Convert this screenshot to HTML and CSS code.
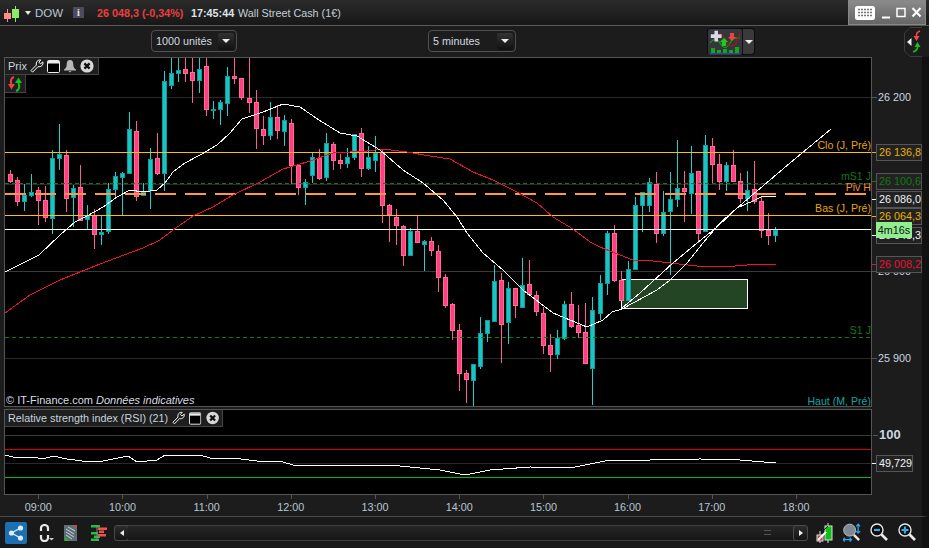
FILE: index.html
```html
<!DOCTYPE html>
<html lang="fr">
<head>
<meta charset="utf-8">
<title>DOW</title>
<link rel="stylesheet" href="styles.css">
</head>
<body>
<svg class="defs" width="0" height="0" aria-hidden="true">
  <symbol id="wrench" viewBox="0 0 14 14"><path d="M1 11.5 L6.4 6 C5.6 3.2 7.6 .6 10.8 1 L8.9 3.2 L10.5 4.9 L12.9 2.9 C13.5 6 11 8.4 8 7.6 L2.6 13.2 Z" fill="none" stroke="#fff" stroke-width="1"/></symbol>
  <symbol id="win" viewBox="0 0 13 13"><rect x=".5" y=".5" width="12" height="12" rx="1" fill="#000" stroke="#eee"/><rect x="1" y="1" width="11" height="2.5" fill="#eee"/></symbol>
  <symbol id="bell" viewBox="0 0 14 14"><path d="M7 1 C9.5 1 10.3 3 10.3 5.5 C10.3 8 11.3 9.5 13 10.5 L13 11.5 L1 11.5 L1 10.5 C2.7 9.5 3.7 8 3.7 5.5 C3.7 3 4.5 1 7 1 Z" fill="#b8b8b8"/><path d="M5.5 12 H8.5 L7 13.5 Z" fill="#b8b8b8"/></symbol>
  <symbol id="close" viewBox="0 0 14 14"><circle cx="7" cy="7" r="6.6" fill="#d8d8d8"/><path d="M4.4 4.4 L9.6 9.6 M9.6 4.4 L4.4 9.6" stroke="#111" stroke-width="2.4"/></symbol>
  <symbol id="flip" viewBox="0 0 16 16"><path d="M7 1 C4 2 3 5 4.5 9" fill="none" stroke="#f04040" stroke-width="2"/><path d="M1 8 H8 L4.5 13.5 Z" fill="#f04040"/><path d="M9 15 C12 14 13 11 11.5 7" fill="none" stroke="#18c018" stroke-width="2"/><path d="M8 7 H15 L11.5 1.5 Z" fill="#18c018"/></symbol>
</svg>

<div class="app">
  <header class="titlebar">
    <svg class="logo" width="16" height="18" viewBox="0 0 16 18"><path d="M3.5 4 V17" stroke="#ff8a8a"/><rect x="0" y="8" width="7" height="6" fill="#ff8a8a"/><path d="M11.5 1 V17" stroke="#88ee66"/><rect x="8" y="4" width="7" height="9" fill="#88ee66"/></svg>
    <span class="caret"></span>
    <span class="symbol">DOW</span>
    <span class="info">i</span>
    <span class="quote">26 048,3 (-0,34%)</span>
    <span class="clock">17:45:44</span>
    <span class="name">Wall Street Cash (1€)</span>
    <div class="winctl">
      <svg class="kbd" width="20" height="14" viewBox="0 0 20 14"><rect width="20" height="14" rx="2.5" fill="#fff"/><path d="M3 3.5 H17 M3 6.5 H17 M3 9.5 H17" stroke="#777" stroke-width="1.6" stroke-dasharray="2 1"/></svg>
      <svg width="10" height="14" viewBox="0 0 10 14"><path d="M1 11.5 H9" stroke="#fff" stroke-width="2"/></svg>
      <svg width="10" height="14" viewBox="0 0 10 14"><rect x="1" y="2.5" width="8" height="8" fill="none" stroke="#fff" stroke-width="1.5"/></svg>
      <svg width="11" height="14" viewBox="0 0 11 14"><path d="M1.5 2 L9.5 10.5 M9.5 2 L1.5 10.5" stroke="#fff" stroke-width="2"/></svg>
    </div>
  </header>

  <div class="toolbar">
    <div class="select units"><span>1000 unités</span><button class="select-btn"></button></div>
    <div class="select period"><span>5 minutes</span><button class="select-btn"></button></div>
    <div class="strategy">
      <svg width="34" height="26" viewBox="0 0 34 26">
        <rect width="34" height="26" rx="2" fill="#33363a"/>
        <path d="M2 14 C6 9 9 9 12 14 S18 21 22 14 S27 10 32 9" fill="none" stroke="#199a19" stroke-width="1.2"/>
        <path d="M11 4 C17 5 17 16 23 17 S29 10 32 4" fill="none" stroke="#8a1f1f" stroke-width="1.6"/>
        <path d="M6 3 H10 V7 H14 V11 H10 V15 H6 V11 H2 V7 H6 Z" fill="#d8d8e8" transform="translate(1,-1) scale(.9)"/>
        <path d="M22 4 H26 V8 H28 L24 12 L20 8 H22 Z" fill="#f04040"/>
        <path d="M14 17 V13 H12 L16 9 L20 13 H18 V17 Z" fill="#19d019"/>
        <path d="M3 19 H7 V24 H3 Z M9 21 H13 V24 H9 Z M15 20 H19 V24 H15 Z M21 21 H25 V24 H21 Z M27 18 H31 V24 H27 Z" fill="#14a814"/>
        <path d="M2 24.5 H32" stroke="#3040c0"/>
      </svg>
      <button class="strategy-btn"></button>
    </div>
    <svg class="sidetab" width="18" height="30" viewBox="0 0 18 30">
      <path d="M18 .5 H6 L.5 6 V24 L6 29.5 H18" fill="#1c1c1c" stroke="#3c3c3c"/>
      <path d="M7.500 11 L3 15 L7.500 19 Z" fill="#eee"/>
      <path d="M16 4 C13 5 12 7 12.500 10" fill="none" stroke="#f04848" stroke-width="1.500"/>
      <path d="M9.500 9 H15.500 L12.500 14 Z" fill="#f04848"/>
      <path d="M9 25 C12 24 14 22 13.500 19" fill="none" stroke="#18c018" stroke-width="1.500"/>
      <path d="M10.500 20 H16.500 L13.500 15 Z" fill="#18c018"/>
    </svg>
  </div>

  <main class="workspace">
    <section class="pane">
      <div class="plot plot-price">
        <svg class="chart" width="866" height="348" viewBox="5 58 866 348">
          <g class="crisp">
            <path d="M5 97.5 H871" stroke="#2a2a2a"/>
            <path d="M5 184.5 H871" stroke="#2a2a2a"/>
            <path d="M5 271.5 H871" stroke="#3a3a3a"/>
            <path d="M5 358.5 H871" stroke="#2a2a2a"/>
          </g>
          <rect class="zone" x="621.5" y="279.5" width="126" height="29"/>
          <g id="candles" class="crisp"></g>
          <g class="crisp">
            <path d="M5 152.5 H871 M5 215.5 H871" stroke="#ffc000"/>
            <path d="M5 229.5 H871" stroke="#fff"/>
            <path d="M5 183.5 H871 M5 337.5 H871" stroke="#0f7a0f" stroke-dasharray="4 3"/>
            <path d="M5 193.5 H871" stroke="#ff9a3c" stroke-width="2" stroke-dasharray="21 9"/>
          </g>
          <polyline class="ma red" points="5,313 30,295 60,280 100,264 124,255 143,248 160,240 173,230 193,216 213,207 233,195 260,182 283,169 290,167 307,162 333,153 367,151 383,149 407,152 430,156 450,159 473,172 493,180 517,192 537,203 553,217 573,229 590,242 600,247 620,255 633,260 653,261 670,263 697,266 723,267 747,265 776,264"/>
          <polyline class="ma" points="5,272 25,262 39,255 60,235 75,222 87,216 103,207 117,197 130,190 143,192 157,190 165,183 173,172 185,163 200,155 217,145 230,133 242,119 263,112 283,104 300,107 319,120 340,133 357,136 380,150 403,170 423,183 443,200 457,217 467,233 483,253 503,270 523,290 553,313 587,327 603,320 612,312 622,309 657,290 670,280 687,263 703,243 720,223 737,208 753,201 763,196 776,197"/>
          <polyline class="ma" points="622,308 640,293 673,263 697,243 717,227 737,208 770,180 790,163 831,129"/>
          <text class="lbl amber" x="871" y="149">Clo (J, Pré)</text>
          <text class="lbl dgreen" x="871" y="180">mS1 J</text>
          <text class="lbl orange" x="871" y="191">Piv H</text>
          <text class="lbl amber" x="871" y="212">Bas (J, Pré)</text>
          <text class="lbl dgreen" x="871" y="334">S1 J</text>
          <text class="lbl teal" x="871" y="405">Haut (M, Pré)</text>
          <text class="copy" x="6" y="404">© IT-Finance.com <tspan class="ital">Données indicatives</tspan></text>
        </svg>
        <div class="legend legend-main">
          <span class="legend-name">Prix</span>
          <svg width="14" height="14"><use href="#wrench"/></svg>
          <svg width="13" height="13"><use href="#win"/></svg>
          <svg width="14" height="14"><use href="#bell"/></svg>
          <svg width="14" height="14"><use href="#close"/></svg>
        </div>
        <div class="legend legend-flip"><svg width="16" height="16"><use href="#flip"/></svg></div>
      </div>
      <div class="axis">
        <span class="axis-val" style="top:32px">26 200</span>
        <span class="axis-val" style="top:206px">26 000</span>
        <span class="axis-val" style="top:293px">25 900</span>
        <span class="tag amber" style="top:87px">26 136,8</span>
        <span class="tag dgreen" style="top:116px">26 100,6</span>
        <span class="tag white" style="top:134px">26 086,0</span>
        <span class="tag amber" style="top:151px">26 064,3</span>
        <span class="tag white" style="top:170px">26 048,3</span>
        <span class="tag red" style="top:199px">26 008,2</span>
        <span class="timer" style="top:165px">4m16s</span>
      </div>
    </section>

    <section class="pane pane-rsi">
      <div class="plot plot-rsi">
        <svg class="chart" width="866" height="84" viewBox="5 410 866 84">
          <g class="crisp">
            <path d="M5 435.5 H871" stroke="#3a3a3a"/>
            <path d="M5 463.5 H871" stroke="#2a2a2a"/>
            <path d="M5 449.5 H871" stroke="#d80000"/>
            <path d="M5 477.5 H871" stroke="#00c000"/>
          </g>
          <polyline class="ma" points="5,455 17,458 33,457 43,459 53,456 67,459 90,462 103,461 128,456 137,462 157,460 165,455 200,455 210,458 233,458 257,461 283,462 293,465 310,465 350,465 400,466 440,470 465,475 490,470 530,467 570,468 610,460 650,460 700,459 740,460 776,463"/>
        </svg>
        <div class="legend legend-rsi">
          <span>Relative strength index (RSI) (21)</span>
          <svg width="14" height="14"><use href="#wrench"/></svg>
          <svg width="13" height="13"><use href="#win"/></svg>
          <svg width="14" height="14"><use href="#close"/></svg>
        </div>
      </div>
      <div class="axis">
        <span class="axis-val big" style="top:18px">100</span>
        <span class="tag short white" style="top:46px">49,729</span>
      </div>
    </section>

    <div class="timeaxis">
      <span>09:00</span><span>10:00</span><span>11:00</span><span>12:00</span><span>13:00</span><span>14:00</span><span>15:00</span><span>16:00</span><span>17:00</span><span>18:00</span>
    </div>
  </main>

  <footer class="bottombar">
    <button class="share">
      <svg width="16" height="16" viewBox="0 0 16 16"><path d="M12.5 3 L3.5 8 L12.5 13" fill="none" stroke="#dfeaf5" stroke-width="1.4"/><circle cx="12.5" cy="3" r="2.6" fill="#dfeaf5"/><circle cx="3.5" cy="8" r="2.6" fill="#dfeaf5"/><circle cx="12.5" cy="13" r="2.6" fill="#dfeaf5"/></svg>
    </button>
    <svg class="tool magnet" width="16" height="18" viewBox="0 0 16 18"><path d="M3 7 V4 A3.5 3 0 0 1 10 4 V7 M3 11 V14 A3.5 3 0 0 0 10 14 V11" fill="none" stroke="#e8e8e8" stroke-width="2.2"/><path d="M11 14 H16 L13.5 16.5 Z" fill="#ccc"/></svg>
    <svg class="tool doc" width="13" height="16" viewBox="0 0 13 16"><rect width="13" height="16" fill="#5f6f78"/><path d="M2 4 L10 9 M2 7 L10 12 M2 10 L8 14 M4 2 L11 6" stroke="#c8d0d4"/><path d="M9 0 H13 V3 Z" fill="#e84040"/><path d="M1 16 L1 12 L5 16 Z" fill="#20c020"/></svg>
    <svg class="tool bars" width="16" height="16" viewBox="0 0 16 16"><path d="M0 0 H9 V2.5 H0 Z M0 7 H7 V9.5 H0 Z M3 10.500 H9 V13 H3 Z M0 13.500 H8 V16 H0 Z" fill="#20c040"/><path d="M7 2.500 H16 V5 H7 Z M8 5.500 H13 V8 H8 Z M7 9 H15 V11.500 H7 Z" fill="#f05050"/><path d="M6 0 V16" stroke="#888"/></svg>
    <div class="scrollbar">
      <button class="scroll-end"><span class="arr-left"></span></button>
      <div class="thumb"><span class="grip"></span></div>
      <button class="scroll-end"><span class="arr-right"></span></button>
    </div>
    <svg class="tool split" width="17" height="20" viewBox="0 0 17 20"><path d="M12 0 V20" stroke="#ddd"/><rect x="9" y="3" width="7" height="14" fill="#10c010" stroke="#ddd"/><path d="M4 8 V20" stroke="#ddd"/><rect x="1" y="12" width="6" height="6" fill="#d04040" stroke="#ddd"/><path d="M2 17 L10 9" stroke="#fff" stroke-width="2"/><path d="M8 7 L12 3" stroke="#222" stroke-width="1"/></svg>
    <svg class="tool fit" width="18" height="20" viewBox="0 0 19 20"><circle cx="7" cy="7" r="6.300" fill="#7d8a96" stroke="#b8c0c8"/><path d="M11.500 12 L17 17.500" stroke="#e8e8e8" stroke-width="2.600"/><path d="M16 1 V10 M14 3 L16 .8 L18 3 M14 8 L16 10.200 L18 8" fill="none" stroke="#2ca8f0" stroke-width="1.300"/><path d="M0 17 H9 M2 15 L0 17 L2 19 M7 15 L9 17 L7 19" fill="none" stroke="#2ca8f0" stroke-width="1.300"/></svg>
    <svg class="tool minus" width="18" height="19" viewBox="0 0 18 19"><circle cx="7" cy="7" r="6" fill="#0a0a0a" stroke="#e8e8e8" stroke-width="1.400"/><path d="M4 7 H10" stroke="#35a8f0" stroke-width="2.200"/><path d="M11.500 11.500 L17 17" stroke="#e8e8e8" stroke-width="2.600"/></svg>
    <svg class="tool" width="18" height="19" viewBox="0 0 18 19"><circle cx="7" cy="7" r="6" fill="#0a0a0a" stroke="#e8e8e8" stroke-width="1.400"/><path d="M3.500 7 H10.500 M7 3.500 V10.500" stroke="#35a8f0" stroke-width="2.200"/><path d="M11.500 11.500 L17 17" stroke="#e8e8e8" stroke-width="2.600"/></svg>
  </footer>
</div>
<script src="chart.js"></script>
</body>
</html>
```

FILE: styles.css
```css
* { box-sizing: border-box; }
html, body { margin: 0; padding: 0; background: #111; }
body { font: 10.8px "Liberation Sans", Arial, sans-serif; color: #cfd8e0; overflow: hidden; }
.defs { position: absolute; }
button { border: 0; padding: 0; margin: 0; background: none; display: block; }

.app { width: 929px; height: 548px; display: flex; flex-direction: column; background: #1c1c1c; overflow: hidden; }

/* title bar */
.titlebar { height: 26px; flex: none; display: flex; align-items: center; padding-left: 4px; position: relative;
  background: linear-gradient(#2b2b2b, #171717); border-bottom: 1px solid #5a5a5a; }
.logo { flex: none; margin-top: 2px; }
.caret { width: 0; height: 0; border: 3.500px solid transparent; border-top: 4px solid #e8e8e8; border-bottom: 0; margin: 1px 4px 0 5px; }
.symbol { color: #b8c8d8; font-size: 11.500px; width: 38px; }
.info { width: 11px; height: 11px; background: #4a4c5c; color: #e8e8e8; font: bold 10px/11px "Liberation Serif", serif; text-align: center; margin-right: 13px; }
.quote { color: #e8403f; font-weight: bold; width: 94px; white-space: nowrap; }
.clock { color: #dfe4e8; font-weight: bold; width: 47px; }
.name { color: #c4ced6; white-space: nowrap; }
.winctl { margin-left: auto; margin-right: 3px; width: 78px; height: 25px; display: flex; align-items: center; gap: 5px; padding-left: 6px;
  background: linear-gradient(#8a8a8a, #666); border: 1px solid #888; }
.kbd { margin-right: 1px; }

/* toolbar */
.toolbar { height: 31px; flex: none; display: flex; align-items: center; position: relative; padding: 0 0 1px 151px; }
.select { height: 22px; display: flex; align-items: center; justify-content: space-between; padding: 0 2px 0 4px;
  border: 1px solid #505050; border-radius: 4px; color: #d4dae0; }
.units { width: 86px; margin-right: 191px; }
.period { width: 88px; margin-right: 191px; }
.select-btn { width: 16px; height: 17px; border-radius: 2px; background: linear-gradient(#333, #101010); position: relative; }
.select-btn::after, .strategy-btn::after { content: ""; position: absolute; left: 4px; top: 6px; border: 4px solid transparent; border-top: 4px solid #eee; border-bottom: 0; }
.strategy { display: flex; width: 48px; height: 27px; border: 1px solid #0c0c0c; border-radius: 3px; background: #111; gap: 1px; }
.strategy svg { flex: none; }
.strategy-btn { flex: 1; position: relative; background: #3a3a3a; border-radius: 0 3px 3px 0; }
.strategy-btn::after { left: 2px; top: 11px; }
.sidetab { position: absolute; left: 904px; top: 1px; }

/* workspace */
.workspace { flex: none; height: 460px; padding-left: 4px; border-right: 7px solid #111; border-bottom: 1px solid #4a4a4a; }
.pane { display: flex; height: 350px; }
.pane-rsi { height: 86px; margin-top: 2px; }
.plot { width: 868px; flex: none; background: #000; border: 1px solid #555; position: relative; }
.plot-price { height: 350px; }
.plot-rsi { height: 86px; }
.chart { display: block; }
.crisp { shape-rendering: crispEdges; }
.zone { fill: #244524; stroke: #fff; shape-rendering: crispEdges; }
.ma { fill: none; stroke: #fff; stroke-width: 1; shape-rendering: crispEdges; }
.ma.red { stroke: #f01030; }
.lbl { font: 10.600px "Liberation Sans", Arial, sans-serif; text-anchor: end; }
.lbl.amber { fill: #e8a800; }
.lbl.dgreen { fill: #0f7a0f; }
.lbl.orange { fill: #ff8a30; }
.lbl.teal { fill: #10a8a8; }
.copy { font: 11px "Liberation Sans", Arial, sans-serif; fill: #d8dde2; }
.ital { font-style: italic; }

.legend { position: absolute; left: 0; top: 0; height: 17px; display: flex; align-items: center; gap: 3px; padding: 0 3px; background: #1e1e1e; border: 1px solid #444; border-width: 0 1px 1px 0; color: #c8d4de; white-space: nowrap; }
.legend-main { width: 94px; }
.legend-name { width: 19px; font-size: 11px; }
.legend-flip { top: 17px; width: 21px; height: 18px; padding: 0 2px; }
.legend-rsi { width: 218px; gap: 4px; }

/* axes */
.axis { flex: 1; position: relative; }
.axis-val { position: absolute; left: 6px; height: 16px; line-height: 16px; color: #ccd6e0; }
.axis-val::before { content: ""; position: absolute; left: -6px; top: 8px; width: 5px; height: 1px; background: #555; }
.axis-val.big { font-size: 13px; font-weight: bold; left: 7px; }
.tag { position: absolute; left: 4px; width: 46px; height: 17px; line-height: 15px; padding: 0 2px; background: #222; border: 1px solid #555; white-space: nowrap; }
.tag.short { width: 37px; }
.tag::before { content: ""; position: absolute; left: -5px; top: 7px; width: 4px; height: 1px; background: currentColor; }
.tag.amber { color: #e8b000; }
.tag.dgreen { color: #107a10; }
.tag.white { color: #f0f4f8; }
.tag.red { color: #e81030; }
.timer { position: absolute; left: 4px; width: 36px; height: 16px; line-height: 16px; text-align: center; background: #90ee90; color: #111; }

.timeaxis { display: flex; margin-left: -7.800px; height: 22px; }
.timeaxis span { width: 84.200px; flex: none; text-align: center; line-height: 24px; color: #b8c8d4; position: relative; }
.timeaxis span::before { content: ""; position: absolute; left: 50%; top: 0; width: 1px; height: 4px; background: #555; }

/* bottom bar */
.bottombar { flex: 1; display: flex; align-items: center; padding-left: 5px; border-right: 7px solid #111; background: #191919; }
.share { width: 22px; height: 22px; flex: none; margin-right: 11px; border-radius: 2px; background: #1c6fb0; display: flex; align-items: center; justify-content: center; }
.tool { flex: none; display: block; }
.magnet { margin-right: 10px; }
.doc { margin-right: 14px; }
.bars { margin-right: 7px; }
.scrollbar { width: 694px; height: 16px; flex: none; display: flex; margin-right: 8px; border: 1px solid #3c3c3c; border-radius: 4px; background: #0e0e0e; }
.scroll-end { width: 15px; flex: none; background: linear-gradient(#2c2c2c, #141414); border: 1px solid #4a4a4a; border-radius: 3px; margin: -1px; display: flex; align-items: center; justify-content: center; }
.thumb { flex: 1; display: flex; align-items: center; justify-content: flex-end; padding-right: 23px; background: linear-gradient(#262626, #161616); }
.grip { width: 7px; height: 5px; border-top: 1px solid #555; border-bottom: 1px solid #555; position: relative; }
.arr-left { border: 3.500px solid transparent; border-right: 4px solid #eee; border-left: 0; }
.arr-right { border: 3.500px solid transparent; border-left: 4px solid #eee; border-right: 0; }
.split { margin-right: 10px; }
.fit { margin-right: 9px; }
.minus { margin-right: 10px; }
```

FILE: chart.js
```js
// Candles: [wickTop, bodyTop, bodyBottom, wickBottom, direction] in 1/3 px from each block's origin.
var blocks = [
  { y0: 55, rows: [
    [345,357,381,385,'d'],[365,376,441,452,'d'],[387,420,441,468,'u'],[357,411,423,427,'u'],[395,405,437,510,'d'],[393,435,489,500,'d'],
    [285,309,491,537,'u'],[207,297,312,345,'u'],[285,300,431,470,'d'],[390,400,429,515,'u'],[330,397,497,497,'d'],[450,481,495,523,'u'],
    [462,481,540,582,'d'],[483,531,540,570,'u'],[385,403,530,537,'u'],[351,363,405,430,'u'],[351,354,369,480,'u'],[170,222,357,357,'u'],
    [198,228,426,437,'d'],[385,410,423,423,'u'],[279,312,409,462,'u'],[234,309,357,360,'d'],[48,78,357,408,'u'],[10,54,93,102,'u'],
    [10,45,57,81,'u'],[10,42,57,81,'d'],[10,51,78,144,'d'],[10,42,78,114,'u'],[10,33,165,183,'d'],[138,162,165,192,'u'],
    [135,141,165,210,'u'],[37,63,147,183,'u'],[10,63,72,87,'d'],[69,69,129,135,'d'],[10,129,144,174,'d'],[105,141,222,282,'d'],
    [183,222,243,270,'d'],[141,186,243,255,'u'],[150,186,228,252,'d'],[180,195,231,273,'u'],[192,204,333,387,'d'],[327,330,399,420,'d']
  ]},
  { y0: 120, rows: [
    [178,186,204,255,'u'],[100,111,168,190,'u'],[87,114,177,180,'d'],[39,69,174,183,'u'],[66,72,123,150,'d'],[102,120,132,147,'d'],
    [84,111,132,144,'u'],[42,42,114,120,'u'],[24,39,147,171,'d'],[78,111,147,150,'u'],[48,99,123,156,'u'],[90,96,258,309,'d'],
    [252,255,285,366,'d'],[267,291,318,375,'d'],[315,318,408,438,'d'],[324,333,408,408,'u'],[288,333,369,369,'d'],[360,363,375,453,'u'],
    [351,363,393,408,'d'],[375,393,474,516,'d'],[462,471,558,564,'d'],[549,552,633,660,'d'],[612,630,762,813,'d'],[750,759,780,849,'d'],
    [732,732,783,858,'u'],[591,639,741,747,'u'],[600,600,642,666,'u'],[435,483,606,606,'u'],[459,480,615,729,'d'],[486,504,609,672,'u'],
    [504,504,558,594,'d'],[414,495,564,564,'u'],[420,492,525,525,'d'],[513,525,576,588,'d'],[561,579,678,702,'d'],[642,675,705,756,'d'],
    [630,654,705,717,'u'],[543,552,657,660,'u'],[516,552,621,624,'d'],[555,615,639,654,'d'],[549,636,732,732,'d']
  ]},
  { y0: 130, rows: [
    [502,540,717,825,'u'],[435,459,552,570,'u'],[303,309,462,495,'u'],[285,309,453,456,'d'],[423,450,513,513,'d'],[393,417,513,513,'u'],
    [201,225,420,420,'u'],[186,186,228,306,'u'],[144,156,228,246,'u'],[126,162,312,339,'d'],[183,246,312,318,'u'],[126,207,246,435,'u'],
    [30,174,210,231,'u'],[123,174,186,276,'d'],[48,129,192,252,'u'],[123,123,312,339,'d'],[15,45,306,306,'u'],[24,48,105,159,'d'],
    [72,102,156,180,'d'],[96,105,156,183,'u'],[60,105,156,156,'d'],[129,153,207,219,'d'],[123,180,207,243,'u'],[93,177,216,222,'d'],
    [198,213,303,324,'d'],[249,300,318,345,'d'],[291,300,318,336,'u']
  ]}
];

var NS = 'http://www.w3.org/2000/svg';
var group = document.getElementById('candles');

function el(name, attrs) {
  var node = document.createElementNS(NS, name);
  for (var key in attrs) node.setAttribute(key, attrs[key]);
  group.appendChild(node);
}

var index = 0;
blocks.forEach(function (block) {
  block.rows.forEach(function (c) {
    var x = Math.floor(10.33 + 7.02 * index);
    var y = function (v) { return Math.round(block.y0 + v / 3); };
    var up = c[4] === 'u';
    el('rect', { x: x, y: y(c[0]), width: 1, height: Math.max(1, y(c[3]) - y(c[0])), fill: up ? '#1fd0d0' : '#ff5c92' });
    el('rect', { x: x - 2 + 0.5, y: y(c[1]) + 0.5, width: 4, height: Math.max(1, y(c[2]) - y(c[1]) - 1),
      fill: up ? '#18c4c4' : '#ff3f7f', stroke: up ? '#0e9c9c' : '#ff6a9a' });
    index++;
  });
});
```
